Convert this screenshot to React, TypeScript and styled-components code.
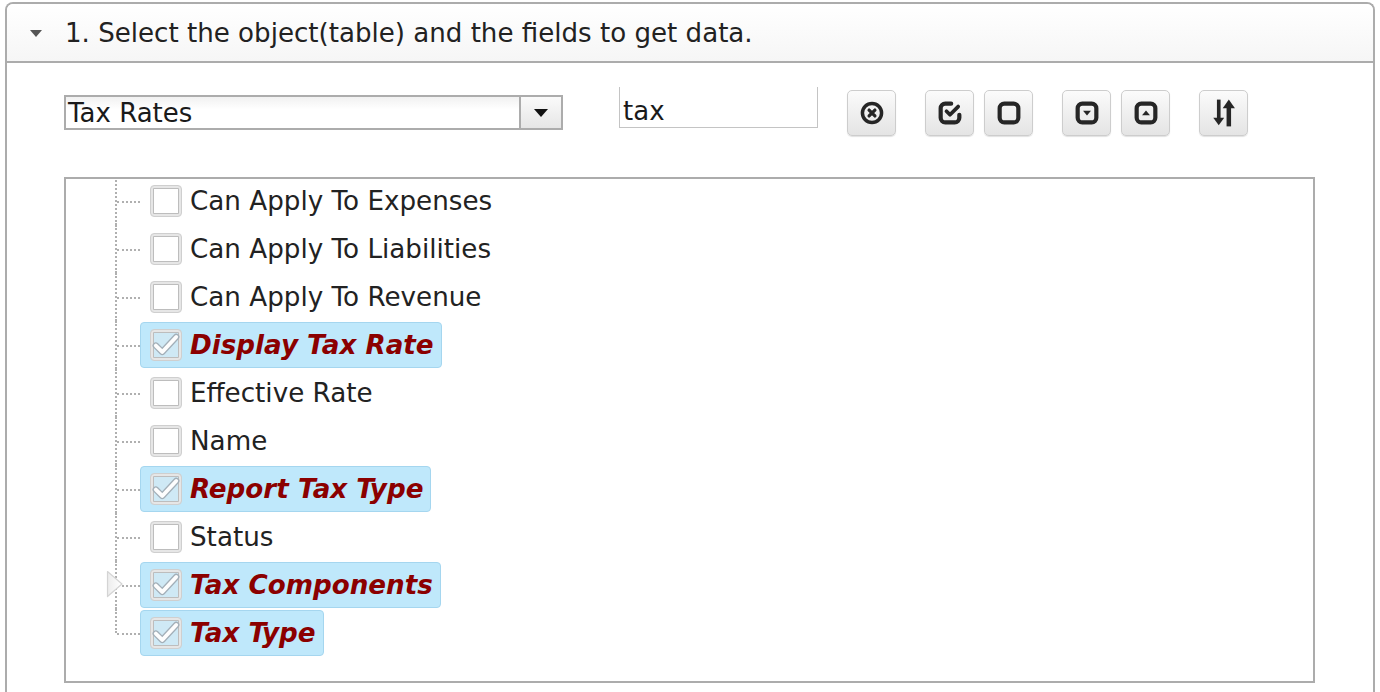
import styled, { createGlobalStyle } from 'styled-components'

const GlobalStyle = createGlobalStyle`
  html, body {
    margin: 0;
    padding: 0;
    background: #fff;
    font-family: "DejaVu Sans", Verdana, sans-serif;
    color: #222;
  }
`

type Field = { label: string; checked: boolean; expandable?: boolean }

const fields: Field[] = [
  { label: 'Can Apply To Expenses', checked: false },
  { label: 'Can Apply To Liabilities', checked: false },
  { label: 'Can Apply To Revenue', checked: false },
  { label: 'Display Tax Rate', checked: true },
  { label: 'Effective Rate', checked: false },
  { label: 'Name', checked: false },
  { label: 'Report Tax Type', checked: true },
  { label: 'Status', checked: false },
  { label: 'Tax Components', checked: true, expandable: true },
  { label: 'Tax Type', checked: true },
]

const ClearIcon = () => (
  <svg width="28" height="28" viewBox="0 0 24 24" fill="none" stroke="#262626" strokeWidth="3" strokeLinecap="round">
    <circle cx="12" cy="12" r="8.2" />
    <path d="M9.5 9.5l5 5M14.5 9.5l-5 5" strokeWidth="2.8" />
  </svg>
)

const CheckAllIcon = () => (
  <svg width="28" height="28" viewBox="0 0 24 24" fill="none" stroke="#262626" strokeWidth="3.6" strokeLinecap="round" strokeLinejoin="round">
    <path d="M13 4H8a4 4 0 0 0-4 4v8a4 4 0 0 0 4 4h8a4 4 0 0 0 4-4v-2.5" />
    <path d="M9 10.5l3 3 7-7" strokeWidth="3.2" />
  </svg>
)

const UncheckIcon = () => (
  <svg width="28" height="28" viewBox="0 0 24 24" fill="none" stroke="#262626" strokeWidth="3.6">
    <rect x="4" y="4" width="16" height="16" rx="4" />
  </svg>
)

const ExpandIcon = () => (
  <svg width="28" height="28" viewBox="0 0 24 24" fill="none" stroke="#262626" strokeWidth="3.6">
    <rect x="4" y="4" width="16" height="16" rx="4" />
    <path d="M8.6 10h6.8L12 14.2z" fill="#262626" stroke="none" />
  </svg>
)

const CollapseIcon = () => (
  <svg width="28" height="28" viewBox="0 0 24 24" fill="none" stroke="#262626" strokeWidth="3.6">
    <rect x="4" y="4" width="16" height="16" rx="4" />
    <path d="M8.6 14h6.8L12 9.8z" fill="#262626" stroke="none" />
  </svg>
)

const SortIcon = () => (
  <svg width="28" height="30" viewBox="0 0 26 28" fill="#262626">
    <rect x="6.4" y="1.5" width="3.4" height="19" />
    <path d="M3 18.5h10.2L8.1 25.5z" />
    <rect x="15.4" y="8" width="4.2" height="18.5" />
    <path d="M11.8 9.5h11.4L17.5 1.5z" />
  </svg>
)

const CheckMark = () => (
  <svg width="30" height="30" viewBox="0 0 28 28" fill="none" strokeLinecap="round" strokeLinejoin="round">
    <path d="M4.5 14.5l6 6L23.5 6.5" stroke="#a3afb8" strokeWidth="6" />
    <path d="M4.5 14.5l6 6L23.5 6.5" stroke="#fdfdfd" strokeWidth="3.6" />
  </svg>
)

const ExpanderArrow = () => (
  <svg width="18" height="28" viewBox="0 0 18 28">
    <defs>
      <linearGradient id="exp" x1="0" y1="0" x2="1" y2="0">
        <stop offset="0" stopColor="#ececec" />
        <stop offset="1" stopColor="#ffffff" />
      </linearGradient>
    </defs>
    <path d="M1.5 1.5L16 14 1.5 26.5z" fill="url(#exp)" stroke="#d4d4d4" strokeWidth="1.2" strokeLinejoin="round" />
  </svg>
)

export default function App() {
  return (
    <>
      <GlobalStyle />
      <Panel>
        <Header>
          <HeaderArrow />
          <HeaderTitle>1. Select the object(table) and the fields to get data.</HeaderTitle>
        </Header>
        <Body>
          <Toolbar>
            <Select>
              <SelectValue>Tax Rates</SelectValue>
              <SelectButton>
                <SelectCaret />
              </SelectButton>
            </Select>
            <Search defaultValue="tax" />
            <ButtonGroup>
              <ToolButton title="Clear"><ClearIcon /></ToolButton>
            </ButtonGroup>
            <ButtonGroup>
              <ToolButton title="Check all"><CheckAllIcon /></ToolButton>
              <ToolButton title="Uncheck all"><UncheckIcon /></ToolButton>
            </ButtonGroup>
            <ButtonGroup>
              <ToolButton title="Expand"><ExpandIcon /></ToolButton>
              <ToolButton title="Collapse"><CollapseIcon /></ToolButton>
            </ButtonGroup>
            <ButtonGroup>
              <ToolButton title="Sort"><SortIcon /></ToolButton>
            </ButtonGroup>
          </Toolbar>
          <TreeBox>
            <TreeList>
              {fields.map((f, i) => (
                <TreeRow key={f.label}>
                  <Connector last={i === fields.length - 1}>
                    {f.expandable && (
                      <Expander>
                        <ExpanderArrow />
                      </Expander>
                    )}
                  </Connector>
                  <Item selected={f.checked}>
                    <CheckBox checked={f.checked}>{f.checked && <CheckMark />}</CheckBox>
                    <Label selected={f.checked}>{f.label}</Label>
                  </Item>
                </TreeRow>
              ))}
            </TreeList>
          </TreeBox>
        </Body>
      </Panel>
    </>
  )
}

const Panel = styled.section`
  margin: 2px 5px 0 5px;
  height: 690px;
  box-sizing: border-box;
  border: 2px solid #acacac;
  border-bottom: none;
  border-radius: 8px 8px 0 0;
  overflow: hidden;
`

const Header = styled.div`
  display: flex;
  align-items: center;
  height: 57px;
  padding-left: 23px;
  background: linear-gradient(#ffffff, #f6f6f6);
  border-bottom: 2px solid #acacac;
`

const HeaderArrow = styled.span`
  width: 0;
  height: 0;
  border-left: 6px solid transparent;
  border-right: 6px solid transparent;
  border-top: 7px solid #555;
  margin-right: 23px;
  margin-top: 1px;
`

const HeaderTitle = styled.span`
  font-size: 26.1px;
  color: #222;
`

const Body = styled.div`
  padding: 27px 58px 0 57px;
`

const Toolbar = styled.div`
  display: flex;
  align-items: flex-start;
  gap: 28px;
`

const Select = styled.div`
  display: flex;
  width: 499px;
  height: 35px;
  margin-top: 5px;
  box-sizing: border-box;
  border: 2px solid #acacac;
  background: linear-gradient(#f1f1f1, #ffffff 40%);
`

const SelectValue = styled.div`
  flex: 1;
  display: flex;
  align-items: center;
  padding-left: 2px;
  font-size: 26px;
  color: #1a1a1a;
`

const SelectButton = styled.div`
  width: 40px;
  display: flex;
  align-items: center;
  justify-content: center;
  border-left: 2px solid #acacac;
  background: linear-gradient(#fafafa, #e6e6e6);
`

const SelectCaret = styled.span`
  width: 0;
  height: 0;
  border-left: 7px solid transparent;
  border-right: 7px solid transparent;
  border-top: 8px solid #111;
`

const Search = styled.input`
  width: 199px;
  height: 41px;
  margin-top: -3px;
  margin-left: 28px;
  box-sizing: border-box;
  border: 1px solid #c4c4c4;
  border-top: none;
  padding: 8px 0 0 3px;
  font-family: "DejaVu Sans", Verdana, sans-serif;
  font-size: 26px;
  color: #1a1a1a;
  outline: none;
  background: #fff;
`

const ButtonGroup = styled.div`
  display: flex;
  gap: 10px;
  margin-left: 1px;
`

const ToolButton = styled.button`
  width: 49px;
  height: 46px;
  padding: 0;
  display: flex;
  align-items: center;
  justify-content: center;
  box-sizing: border-box;
  border: 1px solid #cdcdcd;
  border-radius: 5px;
  background: linear-gradient(#fbfbfb, #e4e4e4);
  box-shadow: 0 1px 1px rgba(0, 0, 0, 0.12);
  cursor: pointer;

  svg {
    flex-shrink: 0;
  }
`

const TreeBox = styled.div`
  margin-top: 41px;
  height: 506px;
  box-sizing: border-box;
  border: 2px solid #acacac;
  overflow: hidden;
`

const TreeList = styled.ul`
  list-style: none;
  margin: -2px 0 0 0;
  padding: 0 0 0 49px;
`

const TreeRow = styled.li`
  display: flex;
  align-items: center;
  height: 48px;
`

const Connector = styled.div<{ last: boolean }>`
  position: relative;
  align-self: stretch;
  width: 25px;
  flex-shrink: 0;

  &::before {
    content: '';
    position: absolute;
    left: 0;
    top: 0;
    height: ${p => (p.last ? '50%' : '100%')};
    border-left: 2px dotted #b0b0b0;
  }

  &::after {
    content: '';
    position: absolute;
    left: 2px;
    right: 0;
    top: 50%;
    border-top: 2px dotted #b0b0b0;
  }
`

const Expander = styled.div`
  position: absolute;
  left: -9px;
  top: 9px;
  z-index: 1;
  line-height: 0;
`

const Item = styled.div<{ selected: boolean }>`
  display: flex;
  align-items: center;
  gap: 8px;
  height: 46px;
  box-sizing: border-box;
  padding: 0 7px 0 9px;
  border: 1px solid ${p => (p.selected ? '#a5d6ef' : 'transparent')};
  border-radius: 4px;
  background: ${p => (p.selected ? '#bfe8fb' : 'transparent')};
`

const CheckBox = styled.span<{ checked: boolean }>`
  display: flex;
  align-items: center;
  justify-content: center;
  width: 32px;
  height: 32px;
  box-sizing: border-box;
  border: 1px solid #cfcfcf;
  border-radius: 4px;
  background: ${p => (p.checked ? '#cfe9f5' : '#ffffff')};
  box-shadow: inset 0 0 0 2px #e6e6e6, inset 0 0 0 3px #bdbdbd;
  overflow: hidden;
`

const Label = styled.span<{ selected: boolean }>`
  font-size: 26.2px;
  white-space: nowrap;
  color: ${p => (p.selected ? '#8b0000' : '#222')};
  font-weight: ${p => (p.selected ? 700 : 400)};
  font-style: ${p => (p.selected ? 'italic' : 'normal')};
`
